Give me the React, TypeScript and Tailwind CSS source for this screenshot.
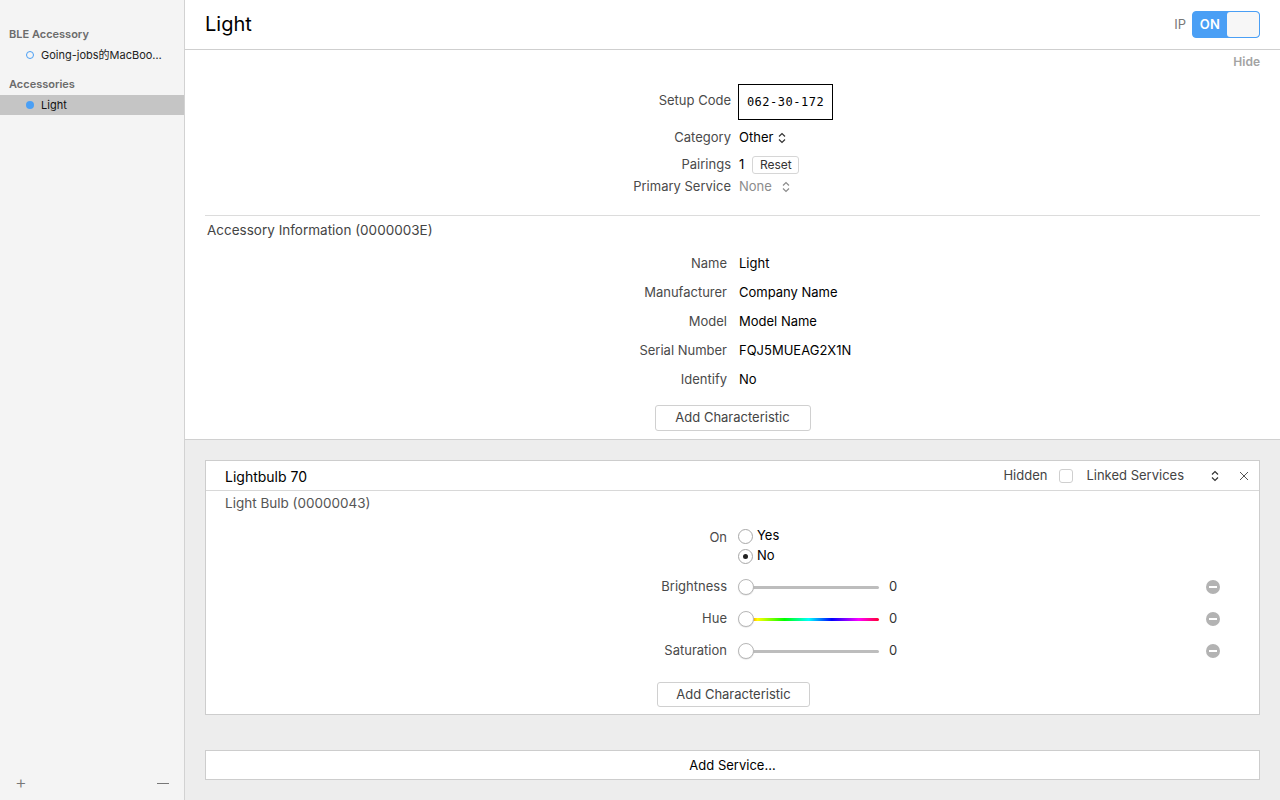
import { ReactNode } from 'react'

const font = { fontFamily: 'Inter, "Noto Sans CJK SC", sans-serif' }

function Row({ label, children, w = 'w-[526px]', h = 'h-[20px]' }: { label: string; children: ReactNode; w?: string; h?: string }) {
  return (
    <div className={`flex items-center ${h}`}>
      <div className={`${w} shrink-0 text-right text-[13px] text-[#4a4a4a]`}>{label}</div>
      <div className="ml-2 flex items-center text-[13px] text-black">{children}</div>
    </div>
  )
}

function UpDown({ className = '' }: { className?: string }) {
  return (
    <svg width="8" height="12" viewBox="0 0 8 12" className={className}>
      <path d="M1 4.5 L4 1.5 L7 4.5 M1 7.5 L4 10.5 L7 7.5" fill="none" stroke="currentColor" strokeWidth="1.2" />
    </svg>
  )
}

function Slider({ hue = false }: { hue?: boolean }) {
  return (
    <div className="relative h-[18px] w-[141px]">
      <div
        className={`absolute left-[6px] right-0 top-[7.5px] h-[3px] rounded-full ${
          hue
            ? 'bg-[linear-gradient(to_right,#ff0000,#ffff00_10%,#00ff00_30%,#00ffff_48%,#0000ff_65%,#ff00ff_85%,#ff0030)]'
            : 'bg-[#bdbdbd]'
        }`}
      />
      <div className="absolute left-0 top-[1px] h-[16px] w-[16px] rounded-full border border-[#b8b8b8] bg-white shadow-[0_0.5px_1px_rgba(0,0,0,0.15)]" />
    </div>
  )
}

function Minus() {
  return (
    <div className="flex h-[14px] w-[14px] items-center justify-center rounded-full bg-[#b3b3b3]">
      <div className="h-[2px] w-[8px] bg-white" />
    </div>
  )
}

function CharRow({ label, hue }: { label: string; hue?: boolean }) {
  return (
    <div className="flex h-[20px] items-center">
      <div className="w-[521px] shrink-0 text-right text-[13px] text-[#4a4a4a]">{label}</div>
      <div className="ml-[11px]">
        <Slider hue={hue} />
      </div>
      <div className="ml-[10px] text-[13px] text-[#333]">0</div>
      <div className="ml-auto mr-[39px]">
        <Minus />
      </div>
    </div>
  )
}

function Radio({ checked, label }: { checked?: boolean; label: string }) {
  return (
    <div className="flex h-[20px] items-center">
      <div className="flex h-[15px] w-[15px] items-center justify-center rounded-full border border-[#a8a8a8] bg-white">
        {checked && <div className="h-[5px] w-[5px] rounded-full bg-[#222]" />}
      </div>
      <span className="ml-[4px] text-[13px] text-black">{label}</span>
    </div>
  )
}

export default function App() {
  return (
    <div className="flex h-[800px] w-[1280px] overflow-hidden bg-white" style={font}>
      {/* sidebar */}
      <div className="flex w-[185px] shrink-0 flex-col border-r border-[#d2d2d2] bg-[#f4f4f4]">
        <div className="mt-[26px] h-[16px] pl-[9px] text-[11px] font-semibold leading-[16px] text-[#6b6b6b]">BLE Accessory</div>
        <div className="mt-[4px] flex h-[18px] items-center pl-[26px]">
          <div className="h-[8px] w-[8px] rounded-full border-[1.5px] border-[#4a9ff5]" />
          <span className="ml-[7px] text-[11px] text-[#222]">Going-jobs的MacBoo…</span>
        </div>
        <div className="mt-[12px] h-[16px] pl-[9px] text-[11px] font-semibold leading-[16px] text-[#6b6b6b]">Accessories</div>
        <div className="mt-[3px] flex h-[20px] items-center bg-[#c5c5c5] pl-[26px]">
          <div className="h-[8px] w-[8px] rounded-full bg-[#4a9ff5]" />
          <span className="ml-[7px] text-[11px] text-[#111]">Light</span>
        </div>
        <div className="mt-auto flex h-[32px] items-center justify-between pb-[2px] pl-[15px] pr-[15px]">
          <span className="text-[18px] font-light leading-none text-[#777]">+</span>
          <div className="h-[1px] w-[12px] bg-[#777]" />
        </div>
      </div>

      {/* main */}
      <div className="flex flex-1 flex-col">
        <div className="flex h-[50px] shrink-0 items-center border-b border-[#cfcfcf] pl-[20px] pr-[20px]">
          <h1 className="-mt-[2px] text-[20px] text-black">Light</h1>
          <div className="ml-auto flex items-center">
            <span className="mr-[6px] text-[13px] text-[#777]">IP</span>
            <div className="flex h-[27px] w-[68px] overflow-hidden rounded-[4px] border border-[#4a9ff5] bg-[#4a9ff5]">
              <div className="flex w-[34px] items-center justify-center text-[13px] font-semibold tracking-wide text-white">ON</div>
              <div className="flex-1 rounded-[3px] bg-[#f7f7f7]" />
            </div>
          </div>
        </div>

        <div className="shrink-0 border-b border-[#d0d0d0] px-[20px] pb-[8px]">
          <div className="mt-[1px] flex h-[22px] items-center justify-end text-[12px] font-semibold text-[#a3a3a3]">Hide</div>
          <div className="mt-[10px]">
            <Row label="Setup Code" h="h-[36px]">
              <div className="-ml-[1px] mt-[1px] flex h-[36px] w-[95px] items-center justify-center border border-black text-[12px] tracking-[0.5px]" style={{ fontFamily: '"DejaVu Sans Mono", monospace' }}>
                062-30-172
              </div>
            </Row>
          </div>
          <div className="mt-[9px]">
            <Row label="Category">
              Other
              <UpDown className="ml-[5px] text-[#333]" />
            </Row>
          </div>
          <div className="mt-[7px]">
            <Row label="Pairings">
              1
              <div className="ml-[8px] flex h-[18px] w-[47px] items-center justify-center rounded-[3px] border border-[#d6d6d6] bg-white text-[12px] text-[#333]">Reset</div>
            </Row>
          </div>
          <div className="mt-[2px]">
            <Row label="Primary Service">
              <span className="text-[#8c8c8c]">None</span>
              <UpDown className="ml-[10px] text-[#8c8c8c]" />
            </Row>
          </div>
          <div className="mt-[18px] border-t border-[#dcdcdc]" />
          <div className="mt-[4px] flex h-[20px] items-center pl-[2px] text-[13.5px] text-[#444]">Accessory Information (0000003E)</div>
          <div className="mt-[14px] flex flex-col gap-[9px]">
            {[
              ['Name', 'Light'],
              ['Manufacturer', 'Company Name'],
              ['Model', 'Model Name'],
              ['Serial Number', 'FQJ5MUEAG2X1N'],
              ['Identify', 'No'],
            ].map(([l, v]) => (
              <div key={l} className="flex h-[20px] items-center">
                <div className="w-[522px] shrink-0 text-right text-[13px] text-[#4a4a4a]">{l}</div>
                <div className="ml-[12px] text-[13px] text-black">{v}</div>
              </div>
            ))}
          </div>
          <div className="mt-[15px] flex justify-center">
            <div className="flex h-[26px] w-[156px] items-center justify-center rounded-[3px] border border-[#d0d0d0] bg-white text-[13px] text-[#444]">Add Characteristic</div>
          </div>
        </div>

        <div className="flex flex-1 flex-col bg-[#ededed] px-[20px] pt-[20px]">
          <div className="h-[255px] border border-[#cdcdcd] bg-white">
            <div className="flex h-[30px] items-center border-b border-[#d8d8d8] pl-[19px] pr-[10px]">
              <span className="mt-[1px] text-[14px] text-black">Lightbulb 70</span>
              <div className="ml-auto mt-[1px] flex items-center text-[13px] text-[#444]">
                <span>Hidden</span>
                <div className="ml-[12px] h-[14px] w-[14px] rounded-[3px] border border-[#cfcfcf] bg-white" />
                <span className="ml-[13px]">Linked Services</span>
                <UpDown className="ml-[27px] text-[#333]" />
                <svg width="10" height="10" viewBox="0 0 10 10" className="ml-[20px] text-[#555]">
                  <path d="M1 1 L9 9 M9 1 L1 9" stroke="currentColor" strokeWidth="1" />
                </svg>
              </div>
            </div>
            <div className="flex h-[24px] items-center pl-[19px] text-[13.5px] text-[#555]">Light Bulb (00000043)</div>
            <div className="mt-[12px] flex">
              <div className="h-[20px] w-[521px] shrink-0 text-right text-[13px] leading-[20px] text-[#4a4a4a]">On</div>
              <div className="ml-[11px] -mt-[1px] flex flex-col">
                <Radio label="Yes" />
                <Radio label="No" checked />
              </div>
            </div>
            <div className="mt-[11px] flex flex-col gap-[12px]">
              <CharRow label="Brightness" />
              <CharRow label="Hue" hue />
              <CharRow label="Saturation" />
            </div>
            <div className="mt-[21px] flex justify-center pl-[2px]">
              <div className="flex h-[25px] w-[153px] items-center justify-center rounded-[3px] border border-[#d0d0d0] bg-white text-[13px] text-[#444]">Add Characteristic</div>
            </div>
          </div>
          <div className="mt-[35px] flex h-[30px] items-center justify-center border border-[#cdcdcd] bg-white pt-[1px] text-[13px] text-black">Add Service…</div>
        </div>
      </div>
    </div>
  )
}
